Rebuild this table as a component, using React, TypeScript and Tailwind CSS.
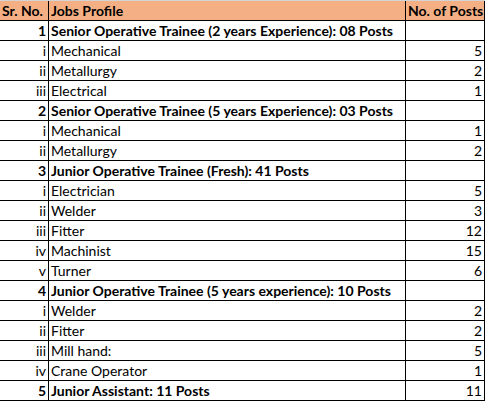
type Row = { no: string; profile: string; posts: string; bold?: boolean };

const rows: Row[] = [
  { no: "1", profile: "Senior Operative Trainee (2 years Experience): 08 Posts", posts: "", bold: true },
  { no: "i", profile: "Mechanical", posts: "5" },
  { no: "ii", profile: "Metallurgy", posts: "2" },
  { no: "iii", profile: "Electrical", posts: "1" },
  { no: "2", profile: "Senior Operative Trainee (5 years Experience): 03 Posts", posts: "", bold: true },
  { no: "i", profile: "Mechanical", posts: "1" },
  { no: "ii", profile: "Metallurgy", posts: "2" },
  { no: "3", profile: "Junior Operative Trainee (Fresh): 41 Posts", posts: "", bold: true },
  { no: "i", profile: "Electrician", posts: "5" },
  { no: "ii", profile: "Welder", posts: "3" },
  { no: "iii", profile: "Fitter", posts: "12" },
  { no: "iv", profile: "Machinist", posts: "15" },
  { no: "v", profile: "Turner", posts: "6" },
  { no: "4", profile: "Junior Operative Trainee (5 years experience): 10 Posts", posts: "", bold: true },
  { no: "i", profile: "Welder", posts: "2" },
  { no: "ii", profile: "Fitter", posts: "2" },
  { no: "iii", profile: "Mill hand:", posts: "5" },
  { no: "iv", profile: "Crane Operator", posts: "1" },
  { no: "5", profile: "Junior Assistant: 11 Posts", posts: "11", bold: true },
];

export default function App() {
  return (
    <div className="w-[487px] h-[401px] bg-white text-black text-[14px] leading-[19px] font-['Lato',sans-serif]">
      <div className="w-[485px] border-t border-[#d4d4d4]">
        <div className="flex h-[20px] bg-[#f4b084] border-b border-black font-bold">
          <div className="w-[49px] border-r border-black pl-[2px] whitespace-nowrap">Sr. No.</div>
          <div className="w-[357px] border-r border-black pl-[2px]">Jobs Profile</div>
          <div className="w-[79px] border-r border-black pl-[2px] whitespace-nowrap">No. of Posts</div>
        </div>
        {rows.map((r, i) => (
          <div key={i} className="flex h-[20px] border-b border-black">
            <div className={`w-[49px] border-r border-black pr-[2px] text-right ${r.bold ? "font-bold" : ""}`}>{r.no}</div>
            <div className={`w-[357px] border-r border-black pl-[2px] whitespace-nowrap ${r.bold ? "font-bold" : ""}`}>{r.profile}</div>
            <div className="w-[79px] border-r border-black pr-[2px] text-right">{r.posts}</div>
          </div>
        ))}
      </div>
    </div>
  );
}
